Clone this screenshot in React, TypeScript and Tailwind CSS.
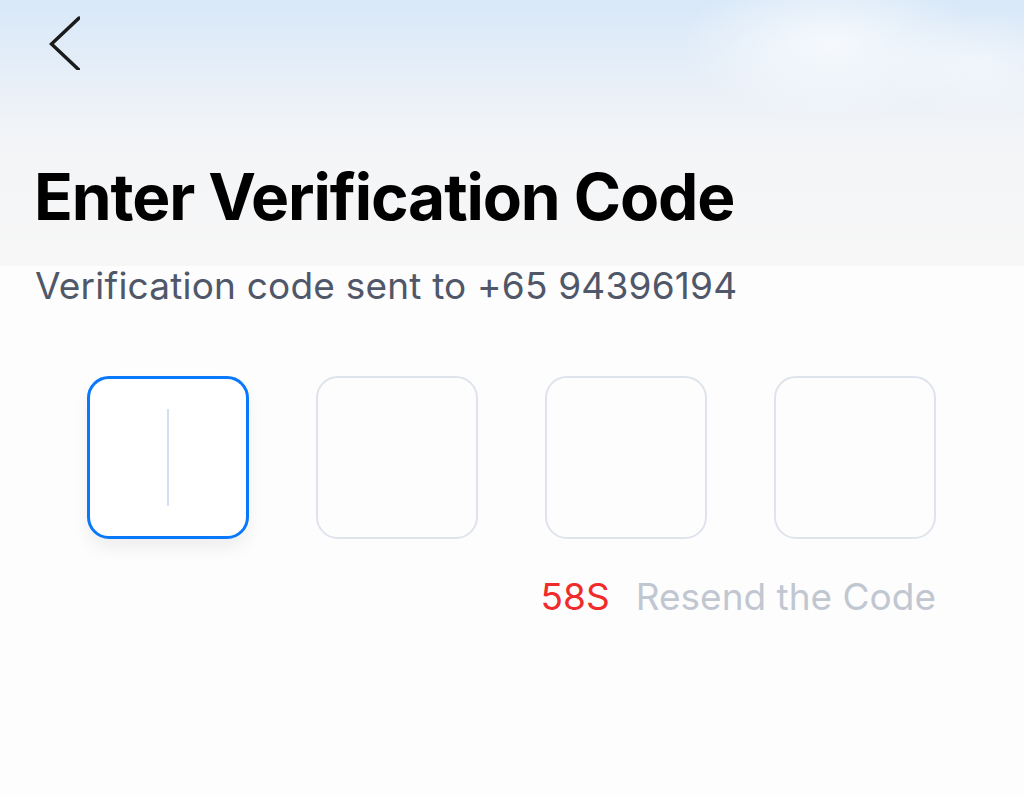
import { useState } from "react";

const digits = [0, 1, 2, 3];

export default function App() {
  const [active] = useState(0);

  return (
    <div className="relative w-[1024px] h-[796px] overflow-hidden bg-[#fdfdfd] font-['Inter',sans-serif]">
      {/* sky backdrop */}
      <div className="absolute inset-x-0 top-0 h-[266px] bg-[linear-gradient(180deg,#d8e8f8_0%,#e3edf8_22%,#eef2f7_42%,#f4f5f7_58%,#f7f7f7_100%)]" />
      <div className="absolute left-[680px] top-[-30px] w-[300px] h-[150px] rounded-full bg-[radial-gradient(closest-side,rgba(255,255,255,0.7),rgba(255,255,255,0))]" />
      <div className="absolute left-[880px] top-[10px] w-[200px] h-[110px] rounded-full bg-[radial-gradient(closest-side,rgba(255,255,255,0.45),rgba(255,255,255,0))]" />

      <div className="relative flex flex-col">
        <button className="ml-[40px] mt-[10px] w-[40px] h-[60px]">
          <svg width="40" height="60" viewBox="0 0 40 60" fill="none">
            <path
              d="M39 8 L11.5 34 L39 60"
              stroke="#1b1b1b"
              strokeWidth="3.4"
              strokeLinecap="round"
              strokeLinejoin="miter"
            />
          </svg>
        </button>

        <h1 className="ml-[34px] mt-[95px] text-[64px] leading-[64px] font-bold text-black tracking-[-1.1px]">
          Enter Verification Code
        </h1>
        <p className="ml-[35px] mt-[39px] text-[37px] leading-[36px] text-[#4f5769] tracking-[0.2px]">
          Verification code sent to +65 94396194
        </p>

        <div className="flex pl-[87px] gap-[67px] mt-[72px]">
          {digits.map((d) =>
            d === active ? (
              <div
                key={d}
                className="w-[162px] h-[163px] rounded-[22px] border-[3px] border-[#0a78fb] bg-white shadow-[0_10px_16px_rgba(0,0,0,0.06)] flex items-center justify-center"
              >
                <div className="w-[2px] h-[97px] bg-[#cfe0f4] ml-[-1px]" />
              </div>
            ) : (
              <div
                key={d}
                className="w-[162px] h-[163px] rounded-[22px] border-2 border-[#dfe4ec] bg-[#fdfdfd]"
              />
            )
          )}
        </div>

        <div className="flex justify-end items-baseline gap-[26px] pr-[88px] mt-[38px] text-[37px] leading-[40px]">
          <span className="text-[#f02b2b]">58S</span>
          <span className="text-[#c1c7d1]">Resend the Code</span>
        </div>
      </div>
    </div>
  );
}
